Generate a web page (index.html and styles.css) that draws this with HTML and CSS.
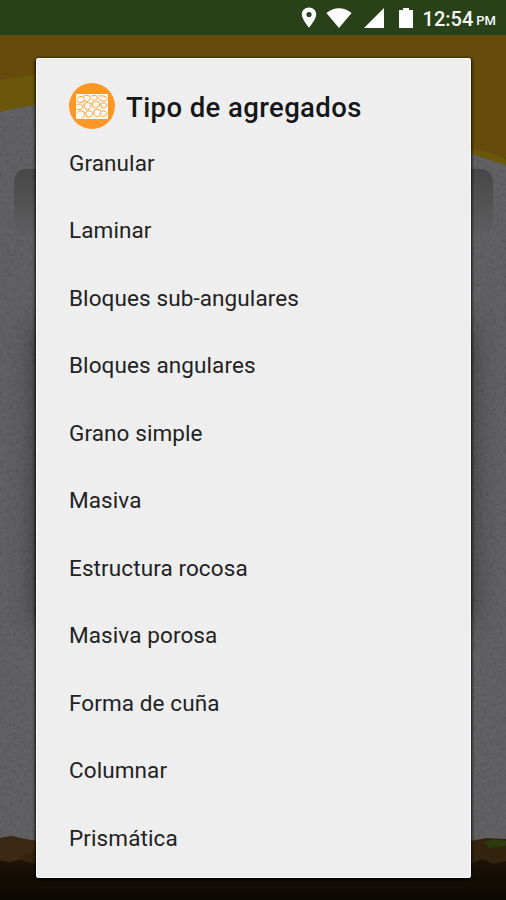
FILE: index.html
```html
<!DOCTYPE html>
<html lang="es">
<head>
    <meta charset="UTF-8">
    <meta name="viewport" content="width=device-width, initial-scale=1.0">
    <title>Tipo de agregados</title>
    <link rel="stylesheet" href="styles.css">
</head>
<body>

    <svg class="scene" viewBox="0 0 506 900" aria-hidden="true">
        <defs>
            <filter id="grain" x="0" y="0" width="100%" height="100%">
                <feTurbulence type="fractalNoise" baseFrequency="0.3" numOctaves="2" seed="4"/>
                <feColorMatrix values="0 0 0 0 0  0 0 0 0 0  0 0 0 0 0  1.2 0 0 0 -0.55"/>
                <feComposite in2="SourceGraphic" operator="in"/>
            </filter>
            <linearGradient id="tab" x1="0" y1="0" x2="0" y2="1">
                <stop offset="0" stop-color="#474747"/>
                <stop offset="1" stop-color="#5e5e60"/>
            </linearGradient>
            <linearGradient id="soil" x1="0" y1="0" x2="0" y2="1">
                <stop offset="0" stop-color="#1d1308"/>
                <stop offset="0.5" stop-color="#140d05"/>
                <stop offset="1" stop-color="#0c0803"/>
            </linearGradient>
        </defs>
        <rect width="506" height="900" fill="#664c0c"/>
        <path d="M0 80 Q60 70 130 66 L400 90 L506 160 V190 H0Z" fill="#6b5709"/>
        <path d="M380 36 H506 V158 L471 148Z" fill="#664c0c"/>
        <path d="M0 112 Q18 107 36 105 L471 154 L506 165 V845 H0Z" fill="#616163"/>
        <path d="M0 112 Q18 107 36 105 L471 154 L506 165 V845 H0Z" filter="url(#grain)" opacity="0.22"/>
        <rect x="14" y="169" width="479" height="65" rx="12" fill="url(#tab)"/>
        <path d="M0 838 L12 836 L24 839 L36 841 H471 L486 838 L506 839 V900 H0Z" fill="#33230f"/>
        <path d="M0 838 L12 836 L24 839 L36 841 V850 L23 855 L12 864 L0 858Z" fill="#3b2914"/>
        <path d="M484 842 L496 839 L506 841 V846 L490 848Z" fill="#2b3c10"/>
        <path d="M0 861 L10 862 L20 860 L36 864 H471 L482 859 L494 864 L506 861 V900 H0Z" fill="url(#soil)"/>
    </svg>

    <div class="side-shade"></div>

    <header class="status-bar">
        <svg class="icon-pin" viewBox="0 0 16 21">
            <path fill-rule="evenodd" d="M8 0.5 C3.9 0.5 0.8 3.6 0.8 7.5 C0.8 12.4 8 20.5 8 20.5 S15.2 12.4 15.2 7.5 C15.2 3.6 12.1 0.5 8 0.5Z M8 4.9 A2.6 2.6 0 1 1 8 10.1 A2.6 2.6 0 0 1 8 4.9Z"/>
        </svg>
        <svg class="icon-wifi" viewBox="0 0 26 20">
            <path d="M0.4 5 Q6 0.3 13 0.3 T25.6 5 L13 20Z"/>
        </svg>
        <svg class="icon-signal" viewBox="0 0 20 20">
            <path d="M20 0 V20 H0Z"/>
        </svg>
        <svg class="icon-battery" viewBox="0 0 14 20">
            <path d="M4 0 H10 V2 H14 V20 H0 V2 H4Z"/>
        </svg>
        <span class="clock">12:54</span>
        <span class="meridiem">PM</span>
    </header>

    <main class="dialog">
        <div class="dialog-header">
            <svg class="dialog-icon" viewBox="0 0 46 46">
                <circle cx="23" cy="23" r="23" fill="#fd9827"/>
                <rect x="7" y="11" width="32" height="25" fill="#fffaf2"/>
                <g fill="none" stroke="#fda33f" stroke-width="1" stroke-linecap="round">
                    <path d="M8 16 Q10 12 14 14 Q17 16 14 19 Q10 21 8 18"/>
                    <path d="M15 13 Q20 11 22 15 Q19 20 15 18"/>
                    <path d="M23 13 Q27 11 29 15 Q27 18 23 17"/>
                    <path d="M30 13 Q35 12 38 15 M30 16 Q34 20 38 17"/>
                    <path d="M8 22 Q12 19 14 24 Q12 28 8 26"/>
                    <path d="M15 21 Q18 18 22 21 Q23 25 19 27 Q15 26 15 21"/>
                    <path d="M23 20 Q28 17 31 20 Q31 24 27 25 Q23 25 23 20"/>
                    <path d="M32 21 Q36 18 38 22 Q37 26 33 25Z"/>
                    <path d="M8 30 Q11 26 15 29 Q17 33 13 35"/>
                    <path d="M17 29 Q21 26 24 30 Q23 35 18 34Z"/>
                    <path d="M25 28 Q28 24 32 28 Q32 33 28 34 Q24 32 25 28"/>
                    <path d="M33 28 Q37 27 38 31 Q36 34 32 33"/>
                </g>
            </svg>
            <h1 class="dialog-title">Tipo de agregados</h1>
        </div>
        <ul class="options">
            <li class="option">Granular</li>
            <li class="option">Laminar</li>
            <li class="option">Bloques sub-angulares</li>
            <li class="option">Bloques angulares</li>
            <li class="option">Grano simple</li>
            <li class="option">Masiva</li>
            <li class="option">Estructura rocosa</li>
            <li class="option">Masiva porosa</li>
            <li class="option">Forma de cuña</li>
            <li class="option">Columnar</li>
            <li class="option">Prismática</li>
        </ul>
    </main>

</body>
</html>
```
FILE: styles.css
```css
/* General Styles */
* {
    box-sizing: border-box;
}

body {
    position: relative;
    margin: 0;
    width: 506px;
    height: 900px;
    overflow: hidden;
    background: #616163;
    font-family: Roboto, sans-serif;
}

/* Dimmed scene behind the dialog */
.scene {
    position: absolute;
    top: 0;
    left: 0;
    width: 506px;
    height: 900px;
}

.side-shade {
    position: absolute;
    top: 325px;
    left: 36px;
    width: 435px;
    height: 300px;
    box-shadow: 0 0 24px rgba(0, 0, 0, 0.45);
}

/* Status Bar */
.status-bar {
    position: relative;
    display: flex;
    align-items: center;
    justify-content: flex-end;
    height: 35px;
    padding-right: 10px;
    background: #294118;
    color: #f5f7f4;
}

.status-bar svg {
    fill: #fff;
}

.icon-pin {
    width: 16px;
    height: 21px;
    margin-right: 9px;
}

.icon-wifi {
    width: 26px;
    height: 20px;
    margin-right: 12px;
}

.icon-signal {
    width: 20px;
    height: 20px;
    margin-right: 15px;
}

.icon-battery {
    width: 14px;
    height: 20px;
    margin-right: 10px;
}

.clock {
    font-size: 20px;
    font-weight: 500;
    line-height: 24px;
    margin-top: 3px;
}

.meridiem {
    font-size: 13px;
    font-weight: 500;
    line-height: 16px;
    margin: 6px 0 0 3px;
}

/* Dialog */
.dialog {
    position: relative;
    width: 435px;
    height: 820px;
    margin: 23px 0 0 36px;
    padding: 25px 33px 0;
    background: #eee;
    border-radius: 3px;
    box-shadow: inset 0 0 0 1px #fafafa, 0 1px 3px 1px rgba(0, 0, 0, 0.85);
}

.dialog-header {
    display: flex;
    align-items: center;
    height: 46px;
}

.dialog-icon {
    width: 46px;
    height: 46px;
}

.dialog-title {
    margin: 3px 0 0 11px;
    font-size: 27.5px;
    font-weight: 500;
    line-height: 34px;
    letter-spacing: 0.4px;
    color: #161616;
    white-space: nowrap;
}

.options {
    margin: 0;
    padding: 0;
    list-style: none;
}

.option {
    display: flex;
    align-items: center;
    height: 67.5px;
    font-size: 22.5px;
    letter-spacing: 0.1px;
    color: #222;
}
```
